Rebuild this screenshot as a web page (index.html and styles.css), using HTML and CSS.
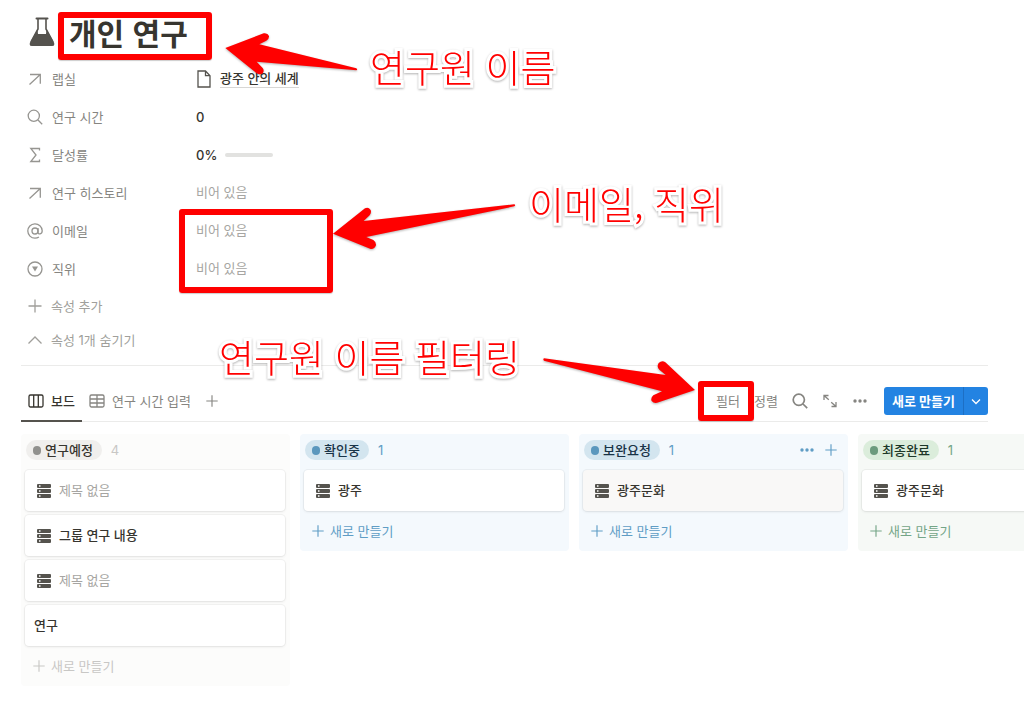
FILE: index.html
```html
<!DOCTYPE html>
<html lang="ko">

<head>
    <meta charset="UTF-8">
    <meta name="viewport" content="width=device-width, initial-scale=1.0">
    <title>개인 연구</title>
    <link rel="stylesheet" href="styles.css">
</head>

<body>
    <!-- Shared icons -->
    <svg class="icon-defs" aria-hidden="true">
        <symbol id="icon-relation" viewBox="0 0 16 16">
            <path d="M3 3.5h10.3v9.3M13 3.8L2.500 13.500" />
        </symbol>
        <symbol id="icon-search" viewBox="0 0 16 16">
            <circle cx="6.800" cy="6.800" r="5.600" />
            <path d="M11 11l4.200 4.200" />
        </symbol>
        <symbol id="icon-plus" viewBox="0 0 16 16">
            <path d="M8 1.500v13M1.500 8h13" />
        </symbol>
        <symbol id="icon-dots" viewBox="0 0 16 16">
            <circle cx="3" cy="8" r="1.700" />
            <circle cx="8" cy="8" r="1.700" />
            <circle cx="13" cy="8" r="1.700" />
        </symbol>
        <symbol id="icon-server" viewBox="0 0 14 14">
            <path fill-rule="evenodd" d="M1 0h12q1 0 1 1v2q0 1-1 1H1Q0 4 0 3V1q0-1 1-1zM2 1.300v1.400h1.500V1.300z" />
            <path fill-rule="evenodd" d="M1 5h12q1 0 1 1v2q0 1-1 1H1Q0 9 0 8V6q0-1 1-1zM2 6.300v1.400h1.500V6.300z" />
            <path fill-rule="evenodd" d="M1 10h12q1 0 1 1v2q0 1-1 1H1q-1 0-1-1v-2q0-1 1-1zM2 11.300v1.400h1.500v-1.400z" />
        </symbol>
    </svg>

    <main class="page">
        <header class="page-title">
            <svg class="flask" viewBox="0 0 26 30" aria-hidden="true">
                <path d="M7.500 1.500h11" fill="none" stroke="#55534e" stroke-width="2" stroke-linecap="round" />
                <path d="M9 2v10L2 25M17 2v10L24 25" fill="none" stroke="#55534e" stroke-width="1.600" />
                <path d="M8.500 12.500L9 17h8l.5-4.500L25 25.500q1.200 3.500-2 3.500H3q-3.200 0-2-3.500z" fill="#55534e" />
            </svg>
            <h1>개인 연구</h1>
        </header>

        <dl class="properties">
            <div class="property">
                <dt><svg class="icon"><use href="#icon-relation" /></svg>랩실</dt>
                <dd>
                    <svg class="icon doc" viewBox="0 0 14 18"><path d="M1 1h7.500L13 5.700V17H1zM8.500 1v4.700H13" /></svg>
                    <a href="#">광주 안의 세계</a>
                </dd>
            </div>
            <div class="property">
                <dt><svg class="icon"><use href="#icon-search" /></svg>연구 시간</dt>
                <dd>0</dd>
            </div>
            <div class="property">
                <dt><svg class="icon" viewBox="0 0 16 16"><path d="M12.500 3.500V1.500H3.800L9 8l-5.200 6.500h8.700v-2" /></svg>달성률</dt>
                <dd>0%<span class="progress"></span></dd>
            </div>
            <div class="property">
                <dt><svg class="icon"><use href="#icon-relation" /></svg>연구 히스토리</dt>
                <dd class="empty">비어 있음</dd>
            </div>
            <div class="property">
                <dt><svg class="icon" viewBox="0 0 16 16"><circle cx="8" cy="8" r="3" /><path d="M11 5v4.300c0 2.600 4.200 2.200 4.200-1.600A7.200 7.200 0 1 0 8 15.200c1.500 0 2.800-.4 3.900-1.200" /></svg>이메일</dt>
                <dd class="empty">비어 있음</dd>
            </div>
            <div class="property">
                <dt><svg class="icon" viewBox="0 0 16 16"><circle cx="8" cy="8" r="7" /><path class="solid" d="M5 5.500h6l-3 5z" /></svg>직위</dt>
                <dd class="empty">비어 있음</dd>
            </div>
        </dl>
        <button class="property-action add"><svg class="icon"><use href="#icon-plus" /></svg>속성 추가</button>
        <button class="property-action"><svg class="icon" viewBox="0 0 16 16"><path d="M1.500 11.500L8 5l6.500 6.500" /></svg>속성 1개 숨기기</button>

        <div class="toolbar">
            <nav class="tabs">
                <button class="tab active">
                    <svg class="icon" viewBox="0 0 16 16"><rect x="1" y="2" width="14" height="12" rx="1.500" /><path d="M5.700 2v12M10.300 2v12" /></svg>보드
                </button>
                <button class="tab">
                    <svg class="icon" viewBox="0 0 16 16"><rect x="1" y="2" width="14" height="12" rx="1.500" /><path d="M1 6h14M1 10h14M8 2v12" /></svg>연구 시간 입력
                </button>
                <button class="tab" aria-label="보기 추가"><svg class="icon small"><use href="#icon-plus" /></svg></button>
            </nav>
            <div class="tools">
                <button>필터</button>
                <button>정렬</button>
                <button aria-label="검색"><svg class="icon bold"><use href="#icon-search" /></svg></button>
                <button aria-label="확장"><svg class="icon" viewBox="0 0 16 16"><path d="M2 7V2.500H6.500M2 2.500l4.800 4.300M9.500 13.500H14V9M14 13.500L9.200 9.200" /></svg></button>
                <button aria-label="더 보기"><svg class="icon fill"><use href="#icon-dots" /></svg></button>
                <div class="new-button">
                    <button>새로 만들기</button>
                    <button class="arrow" aria-label="템플릿"><svg class="icon" viewBox="0 0 16 16"><path d="M4 6.500L8 10.500l4-4" /></svg></button>
                </div>
            </div>
        </div>
    </main>

    <div class="board">
        <section class="column gray">
            <header><span class="status">연구예정</span><span class="count">4</span></header>
            <article class="card untitled"><svg class="server"><use href="#icon-server" /></svg>제목 없음</article>
            <article class="card"><svg class="server"><use href="#icon-server" /></svg>그룹 연구 내용</article>
            <article class="card untitled"><svg class="server"><use href="#icon-server" /></svg>제목 없음</article>
            <article class="card">연구</article>
            <button class="new-card"><svg class="icon small"><use href="#icon-plus" /></svg>새로 만들기</button>
        </section>
        <section class="column blue">
            <header><span class="status">확인중</span><span class="count">1</span></header>
            <article class="card"><svg class="server"><use href="#icon-server" /></svg>광주</article>
            <button class="new-card"><svg class="icon small"><use href="#icon-plus" /></svg>새로 만들기</button>
        </section>
        <section class="column blue">
            <header>
                <span class="status">보완요청</span><span class="count">1</span>
                <div class="column-tools">
                    <button aria-label="더 보기"><svg class="icon fill"><use href="#icon-dots" /></svg></button>
                    <button aria-label="추가"><svg class="icon small"><use href="#icon-plus" /></svg></button>
                </div>
            </header>
            <article class="card hover"><svg class="server"><use href="#icon-server" /></svg>광주문화</article>
            <button class="new-card"><svg class="icon small"><use href="#icon-plus" /></svg>새로 만들기</button>
        </section>
        <section class="column green">
            <header><span class="status">최종완료</span><span class="count">1</span></header>
            <article class="card"><svg class="server"><use href="#icon-server" /></svg>광주문화</article>
            <button class="new-card"><svg class="icon small"><use href="#icon-plus" /></svg>새로 만들기</button>
        </section>
    </div>

    <!-- Annotations drawn over the page -->
    <div class="mark mark-title"></div>
    <div class="mark mark-values"></div>
    <div class="mark mark-filter"></div>

    <svg class="pointer pointer-title" viewBox="0 0 450 210">
        <path d="M31 84L146 40Q158 38 162 48Q163 57 154 62L133 73L424 145Q429 149 424 151L125 125L143 144Q149 152 143 160Q134 166 124 159Z" />
    </svg>
    <svg class="pointer pointer-values" viewBox="0 0 600 210">
        <path d="M24 131L120 55Q130 50 137 60Q140 68 134 76L116 93L568 43Q573 46 568 49L124 141L145 150Q154 156 153 166Q149 178 137 177Z" />
    </svg>
    <svg class="pointer pointer-filter" viewBox="0 0 480 165">
        <path d="M465 105L376 22Q366 15 356 24Q349 36 358 44L377 60L12 10Q8 12 12 17L366 109L340 121Q331 129 335 138Q342 147 356 142Z" />
    </svg>

    <p class="note note-title">연구원 이름</p>
    <p class="note note-values">이메일, 직위</p>
    <p class="note note-filter">연구원 이름 필터링</p>
</body>

</html>
```
FILE: styles.css
```css
* {
    box-sizing: border-box;
}

body {
    position: relative;
    margin: 0;
    background-color: #fff;
    color: #37352f;
    font-family: Inter, "Noto Sans CJK KR", sans-serif;
    font-size: 13px;
    line-height: 20px;
    overflow-x: hidden;
}

h1,
p,
dl,
dd {
    margin: 0;
}

button {
    display: flex;
    align-items: center;
    padding: 0;
    border: none;
    background: none;
    color: inherit;
    font: inherit;
    white-space: nowrap;
    cursor: pointer;
}

.icon-defs {
    position: absolute;
    width: 0;
    height: 0;
}

.icon {
    flex: none;
    width: 16px;
    height: 16px;
    fill: none;
    stroke: currentColor;
    stroke-width: 1.3;
}

.icon.small {
    width: 14px;
    height: 14px;
}

.icon.bold {
    stroke-width: 1.7;
}

.icon.fill {
    fill: currentColor;
    stroke: none;
}

.icon .solid {
    fill: currentColor;
    stroke: none;
}

.page {
    padding: 0 36px 0 21px;
}

/* Title and properties */
.page-title {
    display: flex;
    align-items: center;
    gap: 14px;
    height: 60px;
    padding: 4px 0 0 8px;
}

.flask {
    width: 26px;
    height: 30px;
}

h1 {
    font-family: "Noto Sans CJK KR", sans-serif;
    font-size: 30px;
    line-height: 40px;
    font-weight: 700;
}

.property {
    display: flex;
    align-items: center;
    height: 38px;
    padding-left: 6px;
}

.property dt {
    display: flex;
    align-items: center;
    gap: 9px;
    width: 169px;
    color: #868581;
}

.property dt .icon {
    color: #969591;
}

.property dd {
    display: flex;
    align-items: center;
    gap: 8px;
    padding-bottom: 1px;
    font-weight: 500;
}

.property dd.empty {
    padding-bottom: 3px;
    color: #a6a5a2;
    font-weight: 400;
}

.property .doc {
    width: 16px;
    height: 18px;
    color: #55534e;
}

.property a {
    border-bottom: 1px solid #d8d7d5;
    color: inherit;
    line-height: 18px;
    text-decoration: none;
}

.progress {
    width: 48px;
    height: 4px;
    border-radius: 2px;
    background-color: #e2e2e0;
}

.property-action {
    gap: 8px;
    height: 32px;
    padding-left: 6px;
    color: #a09f9b;
}

.property-action.add {
    height: 36px;
}

/* Toolbar */
.toolbar {
    display: flex;
    justify-content: space-between;
    height: 57px;
    margin-top: 9px;
    padding-top: 14px;
    border-top: 1px solid #ebebea;
    border-bottom: 1px solid #ebebea;
    color: #868581;
}

.tabs {
    display: flex;
}

.tab {
    gap: 7px;
    height: 42px;
    padding: 0 7px;
}

.tab.active {
    padding-top: 2px;
    border-bottom: 2px solid #55534e;
    color: #37352f;
    font-weight: 500;
}

.tools {
    display: flex;
    align-items: center;
    gap: 14px;
    height: 42px;
}

.new-button {
    display: flex;
    height: 28px;
    margin-left: 2px;
    border-radius: 3px;
    background-color: #2383e2;
    color: #fff;
    font-weight: 600;
}

.new-button button {
    padding: 0 8px;
}

.new-button .arrow {
    padding: 0 4px;
    border-left: 1px solid #1d6fc4;
}

/* Board */
.board {
    display: flex;
    align-items: flex-start;
    gap: 10px;
    padding: 12px 0 18px 21px;
    overflow: hidden;
}

.column {
    flex: none;
    width: 269px;
    padding: 0 5px 0 4px;
    border-radius: 4px;
}

.column header {
    display: flex;
    align-items: center;
    gap: 9px;
    height: 36px;
    padding: 0 5px 4px 1px;
}

.status {
    display: flex;
    align-items: center;
    gap: 4px;
    height: 20px;
    padding: 0 9px 0 7px;
    border-radius: 10px;
    font-weight: 500;
}

.status::before {
    content: "";
    width: 8px;
    height: 9px;
    border-radius: 4px;
    background-color: currentColor;
}

.column-tools {
    display: flex;
    gap: 9px;
    margin-left: auto;
}

.card {
    display: flex;
    align-items: center;
    gap: 8px;
    height: 41px;
    margin-bottom: 4px;
    padding: 0 9px 2px;
    border-radius: 4px;
    background-color: #fff;
    box-shadow: 0 0 0 1px rgba(15, 15, 15, 0.04), 0 1px 3px rgba(15, 15, 15, 0.08);
    font-weight: 500;
}

.card.untitled {
    color: #a6a5a2;
    font-weight: 400;
}

.card.hover {
    background-color: #f9f8f7;
}

.server {
    width: 14px;
    height: 14px;
    margin: 2px 0 0 3px;
    fill: #55534e;
}

.new-card {
    gap: 5px;
    height: 36px;
    padding: 0 7px 5px;
}

.gray {
    background-color: #fcfcfb;
    color: #37352f;
}

.gray .status {
    background-color: #f0efed;
}

.gray .status::before {
    background-color: #91918e;
}

.gray .count,
.gray .new-card {
    color: #c8c7c5;
}

.blue {
    background-color: #f4f9fd;
}

.blue .status {
    background-color: #d3e5ef;
    color: #183347;
}

.blue .status::before {
    background-color: #5b97bd;
}

.blue .count,
.blue .column-tools,
.blue .new-card {
    color: #5f9dc5;
}

.green {
    background-color: #f6f9f6;
}

.green .status {
    background-color: #dbeddb;
    color: #1c3829;
}

.green .status::before {
    background-color: #6c9b7d;
}

.green .count,
.green .new-card {
    color: #74a587;
}

/* Annotations */
.mark,
.pointer,
.note {
    position: absolute;
}

.mark {
    border: 6px solid #f00;
    border-radius: 3px;
    box-shadow: 0 1px 1px rgba(0, 0, 0, 0.2);
}

.mark-title {
    top: 12px;
    left: 58px;
    width: 154px;
    height: 48px;
}

.mark-values {
    top: 209px;
    left: 179px;
    width: 154px;
    height: 84px;
}

.mark-filter {
    top: 381px;
    right: 270px;
    width: 56px;
    height: 40px;
}

.pointer {
    fill: #f00;
    filter: drop-shadow(0 1px 1px rgba(0, 0, 0, 0.3));
}

.pointer-title {
    top: 20px;
    left: 215px;
    width: 150px;
}

.pointer-values {
    top: 190px;
    left: 325px;
    width: 200px;
}

.pointer-filter {
    top: 355px;
    right: 324px;
    width: 160px;
}

.note {
    color: #f00;
    font-family: "Noto Sans CJK KR", sans-serif;
    font-size: 38px;
    font-weight: 300;
    line-height: 48px;
    white-space: nowrap;
    -webkit-text-stroke: 6px #fff;
    paint-order: stroke fill;
    filter: drop-shadow(0 1px 1px rgba(0, 0, 0, 0.3));
}

.note-title {
    top: 42px;
    left: 370px;
}

.note-values {
    top: 179px;
    left: 529px;
}

.note-filter {
    top: 332px;
    left: 219px;
}
```
